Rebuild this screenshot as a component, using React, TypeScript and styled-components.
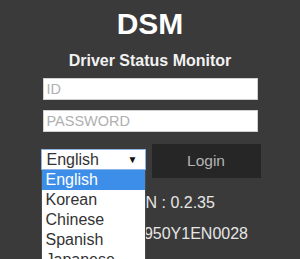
import React from "react";
import styled, { createGlobalStyle } from "styled-components";

const Global = createGlobalStyle`
  html, body {
    margin: 0;
    padding: 0;
    overflow: hidden;
    background: #3a3a3a;
    font-family: "Liberation Sans", Arial, sans-serif;
  }
`;

const Page = styled.div`
  width: 300px;
  height: 259px;
  background: #3a3a3a;
  display: flex;
  flex-direction: column;
  align-items: center;
  padding-top: 9px;
  box-sizing: border-box;
`;

const Title = styled.h1`
  margin: 0;
  font-size: 30px;
  line-height: 30px;
  font-weight: 700;
  color: #ffffff;
`;

const Subtitle = styled.h2`
  margin: 12px 0 0;
  font-size: 16px;
  line-height: 20px;
  font-weight: 700;
  color: #f2f2f2;
`;

const Form = styled.div`
  width: 215px;
  margin-top: 7px;
  display: flex;
  flex-direction: column;
`;

const Input = styled.input<{ $gap?: number }>`
  box-sizing: border-box;
  width: 215px;
  height: 22px;
  margin: 0 0 ${(p) => p.$gap ?? 0}px;
  padding: 0 3px;
  border: 1px solid #cfcfcf;
  background: #ffffff;
  font-family: "Liberation Sans", Arial, sans-serif;
  font-size: 14.5px;
  color: #333;
  outline: none;
  &::placeholder {
    color: #b0b0b0;
  }
`;

const Row = styled.div`
  display: flex;
  align-items: center;
  margin: 12px -3px 0 -2px;
  gap: 6px;
`;

const SelectWrap = styled.div`
  position: relative;
  width: 105px;
  margin-top: -3px;
`;

const SelectBox = styled.div`
  box-sizing: border-box;
  width: 105px;
  height: 21px;
  border: 1px solid #8fb3e6;
  background: #ffffff;
  display: flex;
  align-items: center;
  justify-content: space-between;
  padding: 0 7px 0 5px;
  font-size: 16px;
  color: #333;
`;

const Arrow = styled.span`
  font-size: 10px;
  color: #111;
`;

const List = styled.ul`
  position: absolute;
  top: 21px;
  left: 0;
  box-sizing: border-box;
  width: 105px;
  margin: 0;
  padding: 0;
  list-style: none;
  background: #ffffff;
  border: 1px solid #4a4a4a;
  border-top: none;
`;

const Option = styled.li<{ $active?: boolean }>`
  height: 20px;
  line-height: 20px;
  padding-left: 4px;
  font-size: 16px;
  color: ${(p) => (p.$active ? "#ffffff" : "#333333")};
  background: ${(p) => (p.$active ? "#3d8ee9" : "#ffffff")};
`;

const LoginButton = styled.button`
  width: 109px;
  height: 34px;
  border: none;
  background: #262626;
  color: #b5b5b5;
  font-family: "Liberation Sans", Arial, sans-serif;
  font-size: 15.5px;
  padding: 0;
`;

const Info = styled.div<{ $top: number }>`
  margin-top: ${(p) => p.$top}px;
  font-size: 16px;
  line-height: 20px;
  color: #e6e6e6;
  text-align: center;
  white-space: nowrap;
`;

const languages = ["English", "Korean", "Chinese", "Spanish", "Japanese"];

export default function App() {
  return (
    <>
      <Global />
      <Page>
        <Title>DSM</Title>
        <Subtitle>Driver Status Monitor</Subtitle>
        <Form>
          <Input placeholder="ID" $gap={10} />
          <Input placeholder="PASSWORD" type="password" />
          <Row>
            <SelectWrap>
              <SelectBox>
                <span>English</span>
                <Arrow>▼</Arrow>
              </SelectBox>
              <List>
                {languages.map((l, i) => (
                  <Option key={l} $active={i === 0}>
                    {l}
                  </Option>
                ))}
              </List>
            </SelectWrap>
            <LoginButton>Login</LoginButton>
          </Row>
        </Form>
        <Info $top={15}>VERSION : 0.2.35</Info>
        <Info $top={11}>SERIAL : DS950Y1EN0028</Info>
      </Page>
    </>
  );
}
